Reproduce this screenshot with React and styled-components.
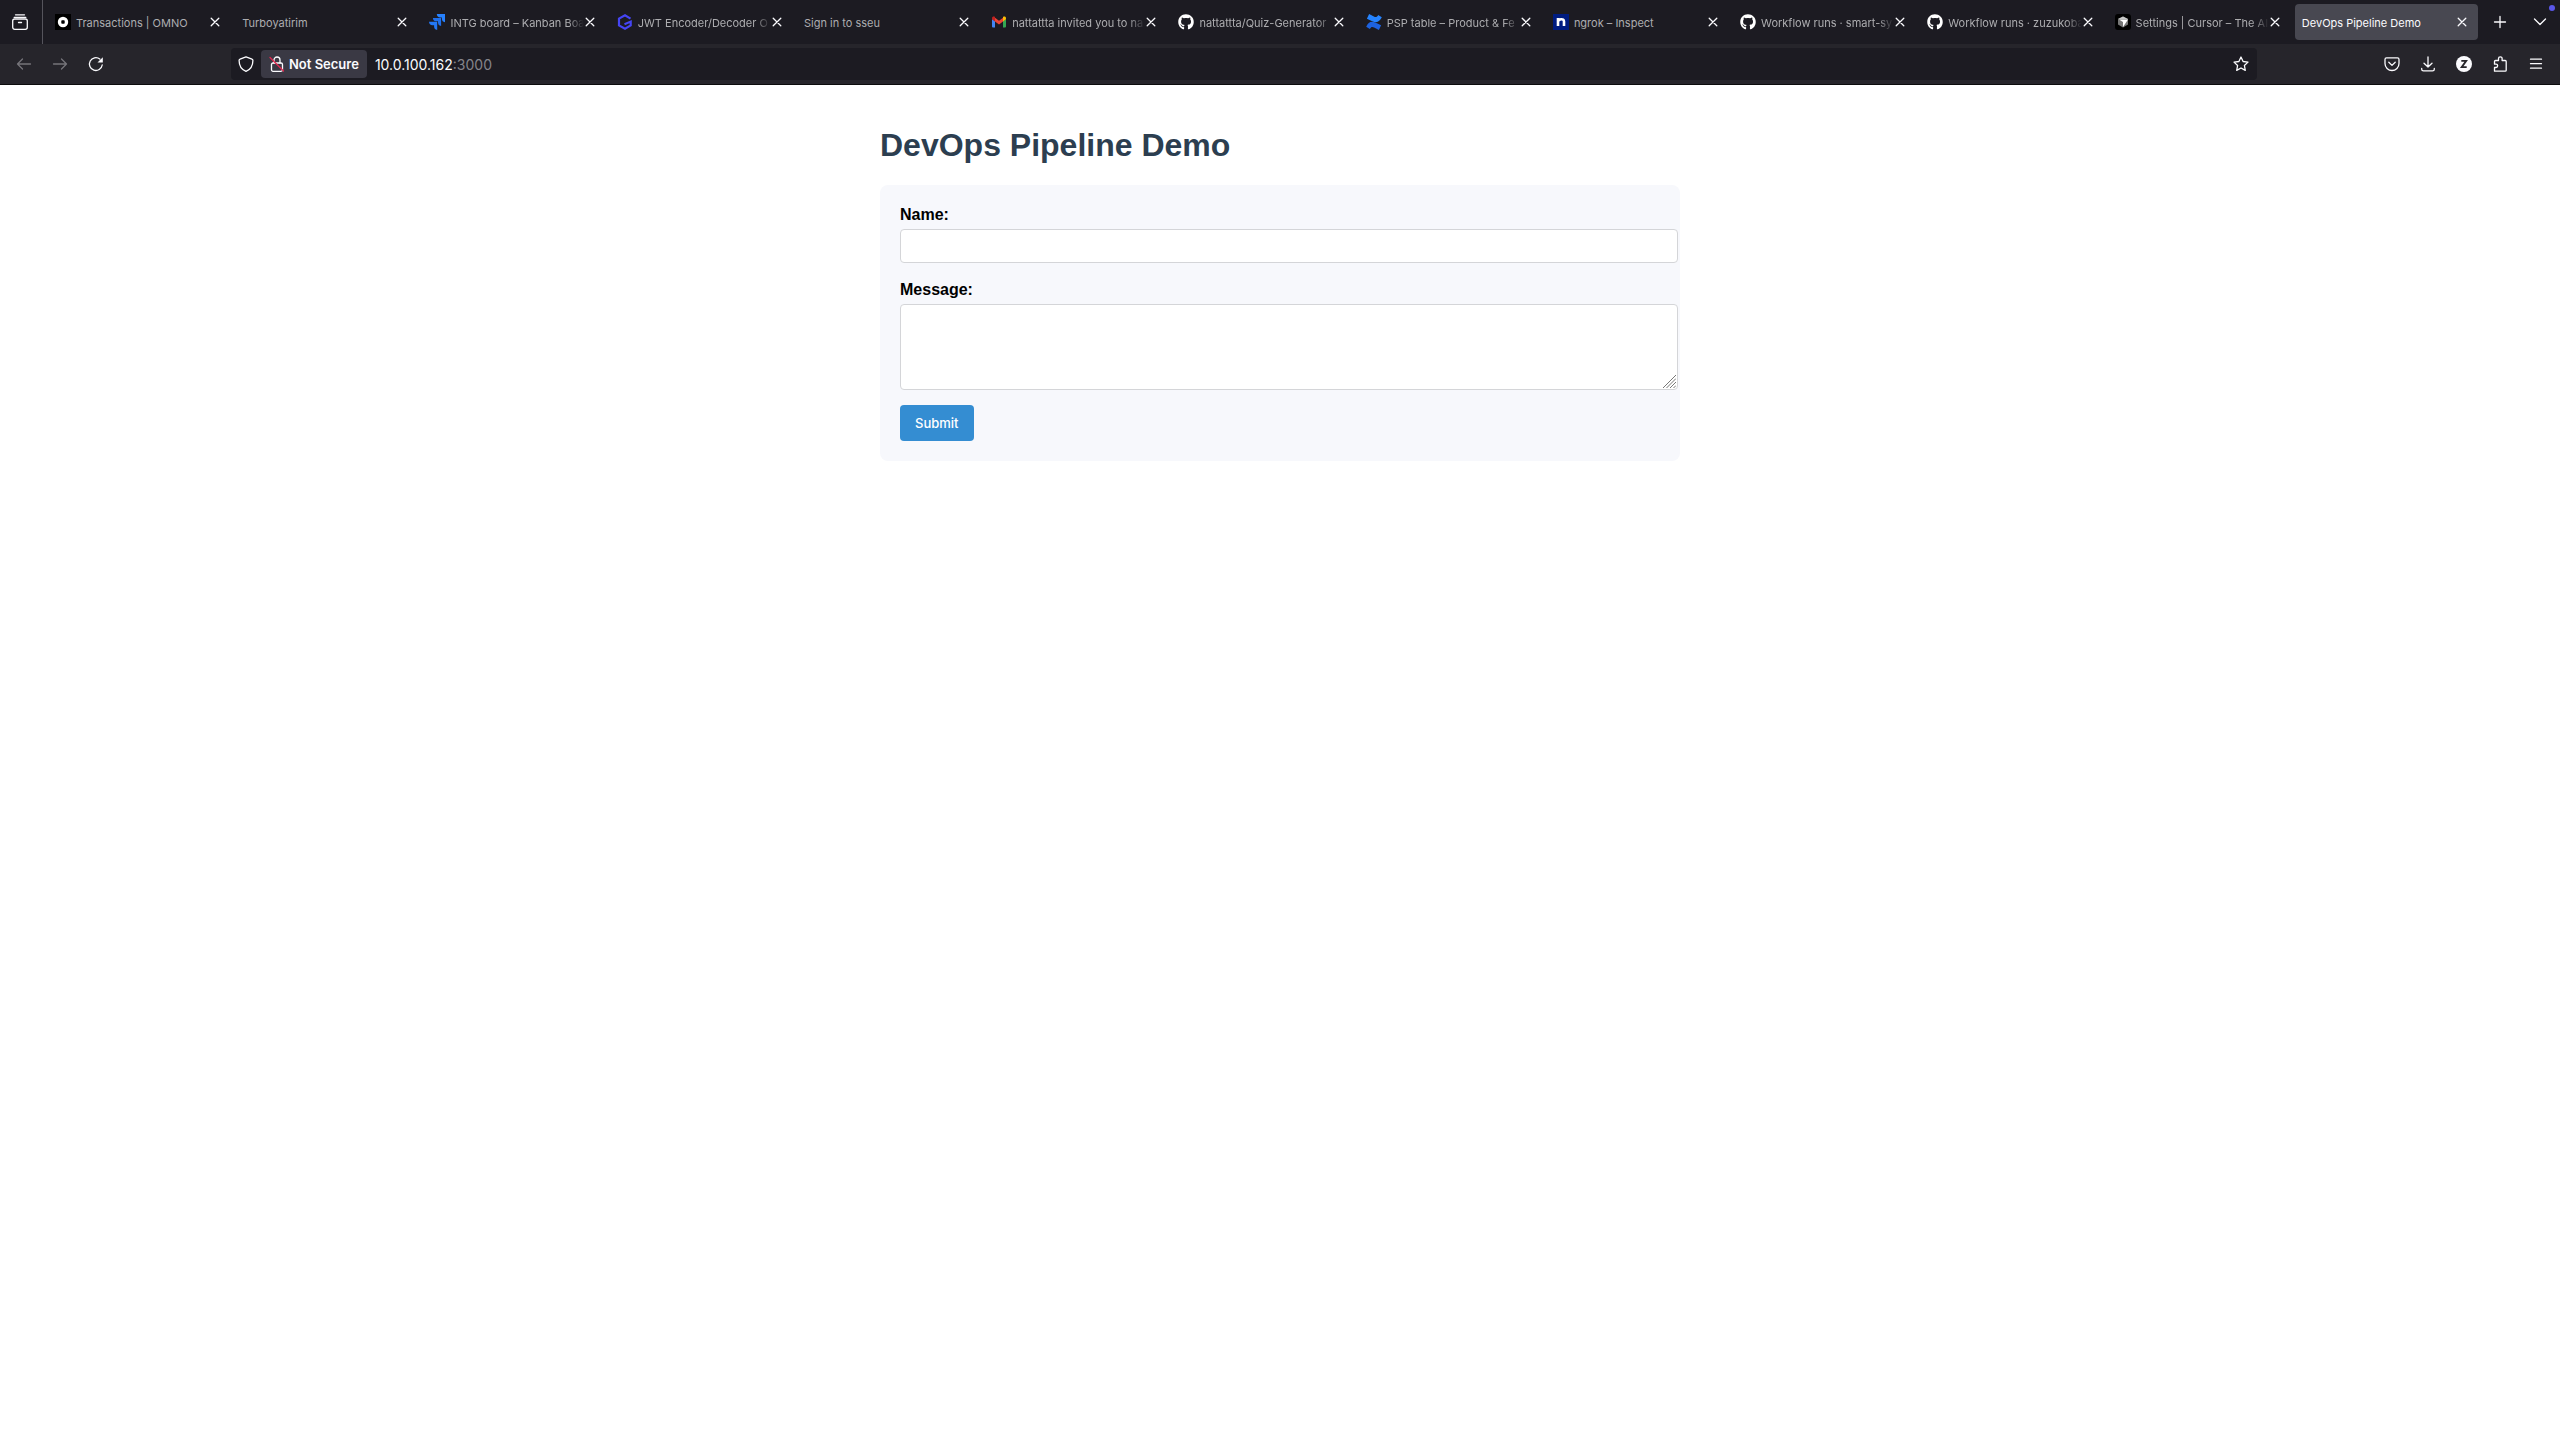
import React from "react";
import styled, { createGlobalStyle, css } from "styled-components";
import { FaGithub } from "react-icons/fa";

const GlobalStyle = createGlobalStyle`
  *, *::before, *::after { box-sizing: border-box; }
  body {
    margin: 0;
    background: #fff;
    color: #000;
    font-family: "Liberation Sans", Arial, sans-serif;
    font-size: 16px;
  }
`;

const uiFont = css`
  font-family: Inter, sans-serif;
`;

const IconButton = styled.button`
  flex: none;
  display: flex;
  align-items: center;
  justify-content: center;
  width: ${(p) => p.$width || 36}px;
  height: 32px;
  padding: 0;
  border: 0;
  border-radius: 4px;
  background: transparent;
  color: ${(p) => (p.$dim ? "#75747a" : "#fbfbfe")};
`;

const Chrome = styled.header`
  ${uiFont}
  position: relative;
  color: #fbfbfe;
  background: #1c1b22;
`;

const TabStrip = styled.div`
  display: flex;
  align-items: center;
  height: 44px;
`;

const ViewSlot = styled.div`
  flex: none;
  display: flex;
  align-items: center;
  align-self: stretch;
  width: 43px;
  margin-right: 3px;
  border-right: 1px solid #55545c;
`;

const Tabs = styled.nav`
  flex: 1;
  min-width: 0;
  display: flex;
`;

const Tab = styled.div`
  flex: 1 1 0;
  min-width: 0;
  display: flex;
  align-items: center;
  height: 36px;
  margin: 0 2px;
  padding: 0 10px 0 7px;
  border-radius: 4px;
  background: ${(p) => (p.$active ? "#484851" : "transparent")};
  color: ${(p) => (p.$active ? "#fbfbfe" : "#adadb0")};
`;

const Favicon = styled.span`
  flex: none;
  display: flex;
  width: 16px;
  height: 16px;
  margin-right: 5px;
`;

const TabTitle = styled.a`
  flex: 1;
  min-width: 0;
  overflow: hidden;
  white-space: nowrap;
  color: inherit;
  text-decoration: none;
  font-size: 11px;
  line-height: 16px;
  padding-top: 2px;
  ${(p) =>
    p.$fade &&
    css`
      mask-image: linear-gradient(to left, transparent, #000 16px);
    `}
`;

const CloseButton = styled.button`
  flex: none;
  display: flex;
  align-items: center;
  justify-content: center;
  width: 12px;
  height: 20px;
  padding: 0;
  border: 0;
  background: transparent;
  color: #fbfbfe;
`;

const Notice = styled.span`
  position: absolute;
  top: 5px;
  right: 5px;
  width: 6px;
  height: 6px;
  border-radius: 50%;
  background: #5a57e8;
`;

const Toolbar = styled.div`
  display: flex;
  align-items: center;
  height: 41px;
  padding: 0 6px;
  background: #26252b;
  border-bottom: 1px solid #0c0c0d;
`;

const Spring = styled.div`
  flex: 0 1 117px;
`;

const UrlBar = styled.div`
  flex: 1;
  min-width: 0;
  display: flex;
  align-items: center;
  height: 32px;
  border-radius: 4px;
  background: #1c1b22;
`;

const Security = styled.button`
  ${uiFont}
  flex: none;
  display: flex;
  align-items: center;
  gap: 4px;
  height: 28px;
  margin-right: 8px;
  padding: 0 8px;
  border: 0;
  border-radius: 4px;
  background: #3a3944;
  color: #fbfbfe;
  font-size: 13px;
  font-weight: 600;
`;

const Address = styled.div`
  flex: 1;
  min-width: 0;
  font-size: 14px;
  line-height: 20px;
  padding-top: 1px;
  white-space: nowrap;
  color: #85848a;
`;

const Host = styled.span`
  color: #fbfbfe;
`;

const Page = styled.main`
  max-width: 840px;
  margin: 0 auto;
  padding: 20px;
`;

const Title = styled.h1`
  margin: 21px 0;
  font-size: 32px;
  line-height: 38px;
  color: #2c3e50;
`;

const Form = styled.form`
  padding: 20px;
  border-radius: 8px;
  background: #f7f8fc;
`;

const Field = styled.div`
  position: relative;
  margin-bottom: 15px;
`;

const Label = styled.label`
  display: block;
  margin-bottom: 5px;
  font-weight: bold;
  line-height: 19px;
`;

const control = css`
  ${uiFont}
  display: block;
  box-sizing: content-box;
  width: 100%;
  padding: 8px;
  border: 1px solid #d4d5d8;
  border-radius: 4px;
  background: #fff;
  font-size: 13px;
  line-height: 16px;
`;

const TextInput = styled.input`
  ${control}
  height: 16px;
  margin-bottom: 17px;
`;

const TextArea = styled.textarea`
  ${control}
  height: 68px;
  resize: vertical;

  &::-webkit-resizer {
    display: none;
  }
`;

const Grip = styled.svg`
  position: absolute;
  right: -16px;
  bottom: 2px;
  pointer-events: none;
`;

const SubmitButton = styled.button`
  ${uiFont}
  height: 36px;
  display: block;
  padding: 0 15px;
  border: 0;
  border-radius: 4px;
  background: #348dd2;
  color: #fff;
  font-size: 13px;
  font-weight: 500;
`;

const Line = ({ size = 16, children, width = 1.3 }) => (
  <svg
    width={size}
    height={size}
    viewBox="0 0 16 16"
    fill="none"
    stroke="currentColor"
    strokeWidth={width}
    strokeLinecap="round"
    strokeLinejoin="round"
    aria-hidden="true"
  >
    {children}
  </svg>
);

const OmnoIcon = () => (
  <svg width="16" height="16" viewBox="0 0 16 16">
    <rect width="16" height="16" fill="#000" />
    <circle cx="8" cy="8" r="5.2" fill="#fff" />
    <rect x="6.3" y="6.3" width="3.4" height="3.4" rx="0.8" fill="#000" />
  </svg>
);

const JiraIcon = () => (
  <svg width="16" height="16" viewBox="0 0 16 16">
    <path fill="#2681ff" d="M7.8 0H16v8.2a3.6 3.6 0 0 1-3.1-3.5V3.4h-1.4A3.6 3.6 0 0 1 7.8 0z" />
    <path fill="#1f6fec" d="M3.9 3.9h8.2v8.2A3.6 3.6 0 0 1 9 8.6V7.3H7.6a3.6 3.6 0 0 1-3.7-3.4z" />
    <path fill="#2378f5" d="M0 7.8h8.2V16a3.6 3.6 0 0 1-3.1-3.5v-1.3H3.7A3.6 3.6 0 0 1 0 7.8z" />
  </svg>
);

const JwtIcon = () => (
  <svg width="16" height="16" viewBox="0 0 16 16" fill="none" stroke="#4545f5" strokeWidth="2.2">
    <path d="M13.500 4.600L8 1.300 2 4.600v6.800L8 14.700l5.700-3.300V7.600L7.500 10.200" />
  </svg>
);

const GmailIcon = () => (
  <svg width="16" height="16" viewBox="0 0 16 16">
    <path fill="#4285f4" d="M1 5l3 2.200V13.500H2a1 1 0 0 1-1-1z" />
    <path fill="#34a853" d="M15 5l-3 2.200v6.300h2a1 1 0 0 0 1-1z" />
    <path fill="#ea4335" d="M4 3.800l4 3 4-3v3.700l-4 3-4-3z" />
    <path fill="#c5221f" d="M1 4.300C1 2.700 2.700 2 4 3v4.500L1 5.300z" />
    <path fill="#fbbc04" d="M15 4.300C15 2.700 13.300 2 12 3v4.500l3-2.200z" />
  </svg>
);

const ConfluenceIcon = () => (
  <svg width="16" height="16" viewBox="0 0 16 16">
    <path fill="#1d62e0" d="M.6 11.900c1.800-3 4-5.600 9.200-3.100l5.300 2.500-2.200 4.600-4.800-2.300c-2-1-3-.6-4.300 1.500L.2 12.700z" />
    <path fill="#2684ff" d="M15.400 4.100c-1.800 3-4 5.600-9.200 3.100L.9 4.700 3.100.1l4.800 2.300c2 1 3 .6 4.300-1.500l3.600 2.400z" />
  </svg>
);

const NgrokIcon = () => (
  <svg width="16" height="16" viewBox="0 0 16 16">
    <rect width="16" height="16" fill="#001c80" />
    <path fill="none" stroke="#fff" strokeWidth="2.600" d="M5 12V4M5 7.500C5.500 5 11 4 11 7.500V12" />
  </svg>
);

const CursorIcon = () => (
  <svg width="16" height="16" viewBox="0 0 16 16">
    <rect width="16" height="16" rx="3" fill="#000" />
    <path fill="#777" d="M8 2.500L13 5v5.500L8 13.500 3 10.500V5z" />
    <path fill="#c8c8c8" d="M3 5l5-2.500L13 5z" />
    <path fill="#fff" d="M4 5.500h9L8 13V8z" />
  </svg>
);

const GithubIcon = () => <FaGithub size={16} color="#fff" />;

const tabs = [
  { title: "Transactions | OMNO", Icon: OmnoIcon },
  { title: "Turboyatirim" },
  { title: "INTG board – Kanban Boa", Icon: JiraIcon, fade: true },
  { title: "JWT Encoder/Decoder O", Icon: JwtIcon, fade: true },
  { title: "Sign in to sseu" },
  { title: "nattattta invited you to na", Icon: GmailIcon, fade: true },
  { title: "nattattta/Quiz-Generator", Icon: GithubIcon, fade: true },
  { title: "PSP table – Product & Fe", Icon: ConfluenceIcon, fade: true },
  { title: "ngrok – Inspect", Icon: NgrokIcon },
  { title: "Workflow runs · smart-sy", Icon: GithubIcon, fade: true },
  { title: "Workflow runs · zuzukoba", Icon: GithubIcon, fade: true },
  { title: "Settings | Cursor – The AI", Icon: CursorIcon, fade: true },
  { title: "DevOps Pipeline Demo", active: true },
];

const Cross = () => (
  <svg width="10" height="10" viewBox="0 0 10 10" fill="none" stroke="currentColor" strokeWidth="1.3" strokeLinecap="round" aria-hidden="true">
    <path d="M1.200 1.200l7.600 7.600M8.800 1.200L1.200 8.800" />
  </svg>
);

const BrowserTab = ({ title, Icon, fade, active }) => (
  <Tab $active={active}>
    {Icon && (
      <Favicon>
        <Icon />
      </Favicon>
    )}
    <TabTitle href="#" $fade={fade} aria-current={active ? "page" : undefined}>
      {title}
    </TabTitle>
    <CloseButton type="button" aria-label={`Close ${title}`}>
      <Cross />
    </CloseButton>
  </Tab>
);

export default function App() {
  return (
    <>
      <GlobalStyle />
      <Chrome>
        <TabStrip>
          <ViewSlot>
            <IconButton $width={40} type="button" aria-label="Recent browsing">
              <Line>
                <path d="M3.500 .8h9M2.200 3.400h11.600" />
                <rect x=".7" y="5" width="14.600" height="10.300" rx="2" />
                <path d="M6.500 8.500h3" />
              </Line>
            </IconButton>
          </ViewSlot>
          <Tabs aria-label="Open tabs">
            {tabs.map((tab) => (
              <BrowserTab key={tab.title} {...tab} />
            ))}
          </Tabs>
          <IconButton $width={40} type="button" aria-label="New tab">
            <Line>
              <path d="M8 2.500v11M2.500 8h11" />
            </Line>
          </IconButton>
          <IconButton $width={40} type="button" aria-label="List all tabs">
            <Line>
              <path d="M2.500 5L8 10.500 13.500 5" />
            </Line>
          </IconButton>
        </TabStrip>
        <Notice />

        <Toolbar>
          <IconButton $dim type="button" aria-label="Back">
            <Line>
              <path d="M14.500 8h-13M6.500 3l-5 5 5 5" />
            </Line>
          </IconButton>
          <IconButton $dim type="button" aria-label="Forward">
            <Line>
              <path d="M1.500 8h13M9.500 3l5 5-5 5" />
            </Line>
          </IconButton>
          <IconButton type="button" aria-label="Reload">
            <Line>
              <path d="M14.200 9A6.400 6.400 0 1 1 11.800 3" />
              <path d="M14.800 1.200v5.300H9.500z" fill="currentColor" stroke="none" />
            </Line>
          </IconButton>
          <Spring />
          <UrlBar>
            <IconButton $width={30} type="button" aria-label="Tracking protection">
              <Line>
                <path d="M8 .8l6 2.400c.6.200.9.600.9 1.200 0 5-2.300 9-6.900 10.900C3.400 13.400 1.100 9.400 1.100 4.400c0-.6.300-1 .9-1.200z" />
              </Line>
            </IconButton>
            <Security type="button">
              <Line>
                <path d="M5 7V4a3 3 0 0 1 6 0v3" />
                <rect x="2.500" y="7" width="11" height="8.300" rx="1.500" />
                <path d="M1 1.500l13.500 13.500" stroke="#e22850" />
              </Line>
              Not Secure
            </Security>
            <Address>
              <Host>10.0.100.162</Host>:3000
            </Address>
            <IconButton $width={32} type="button" aria-label="Bookmark this page">
              <Line>
                <path d="M8 1l2.100 4.500 4.900.6-3.600 3.400.9 4.900L8 12l-4.300 2.400.9-4.900L1 6.100l4.900-.6z" />
              </Line>
            </IconButton>
          </UrlBar>
          <Spring />
          <IconButton type="button" aria-label="Save to Pocket">
            <Line>
              <path d="M2.500 1.900h11a1.500 1.500 0 0 1 1.500 1.500V7.500a7 7 0 0 1-14 0V3.400a1.500 1.500 0 0 1 1.500-1.500z" />
              <path d="M4.800 6.300L8 9.400l3.200-3.100" />
            </Line>
          </IconButton>
          <IconButton type="button" aria-label="Downloads">
            <Line>
              <path d="M8 1v10M4 7.200L8 11l4-3.800M1.700 12.500v.7c0 1 .7 1.600 1.800 1.600h9c1.100 0 1.800-.6 1.800-1.600v-.7" />
            </Line>
          </IconButton>
          <IconButton type="button" aria-label="Account">
            <svg width="16" height="16" viewBox="0 0 16 16" aria-hidden="true">
              <circle cx="8" cy="8" r="8" fill="#fbfbfe" />
              <path d="M5.300 4.900h4.900L5.700 11.100h5" fill="none" stroke="#26252b" strokeWidth="1.800" />
            </svg>
          </IconButton>
          <IconButton type="button" aria-label="Extensions">
            <Line>
              <path d="M2.500 15.200V11.500H4a1.600 1.600 0 0 0 0-3.300H2.500V5.500c0-.6.400-1 1-1H6.500V2.600a1.800 1.800 0 0 1 3.600 0v1.900h3.100c.6 0 1 .4 1 1v8.700c0 .6-.4 1-1 1z" />
            </Line>
          </IconButton>
          <IconButton type="button" aria-label="Open application menu">
            <Line>
              <path d="M2.500 3.200h11M2.500 7.700h11M2.500 12.200h11" />
            </Line>
          </IconButton>
        </Toolbar>
      </Chrome>

      <Page>
        <Title>DevOps Pipeline Demo</Title>
        <Form>
          <Field>
            <Label htmlFor="name">Name:</Label>
            <TextInput id="name" type="text" />
          </Field>
          <Field>
            <Label htmlFor="message">Message:</Label>
            <TextArea id="message" />
            <Grip width="13" height="13" viewBox="0 0 13 13" stroke="#777" aria-hidden="true">
              <path d="M0 13L13 0M3.500 13L13 3.500M7 13l6-6M10.500 13l2.500-2.500" />
            </Grip>
          </Field>
          <SubmitButton type="submit">Submit</SubmitButton>
        </Form>
      </Page>
    </>
  );
}
